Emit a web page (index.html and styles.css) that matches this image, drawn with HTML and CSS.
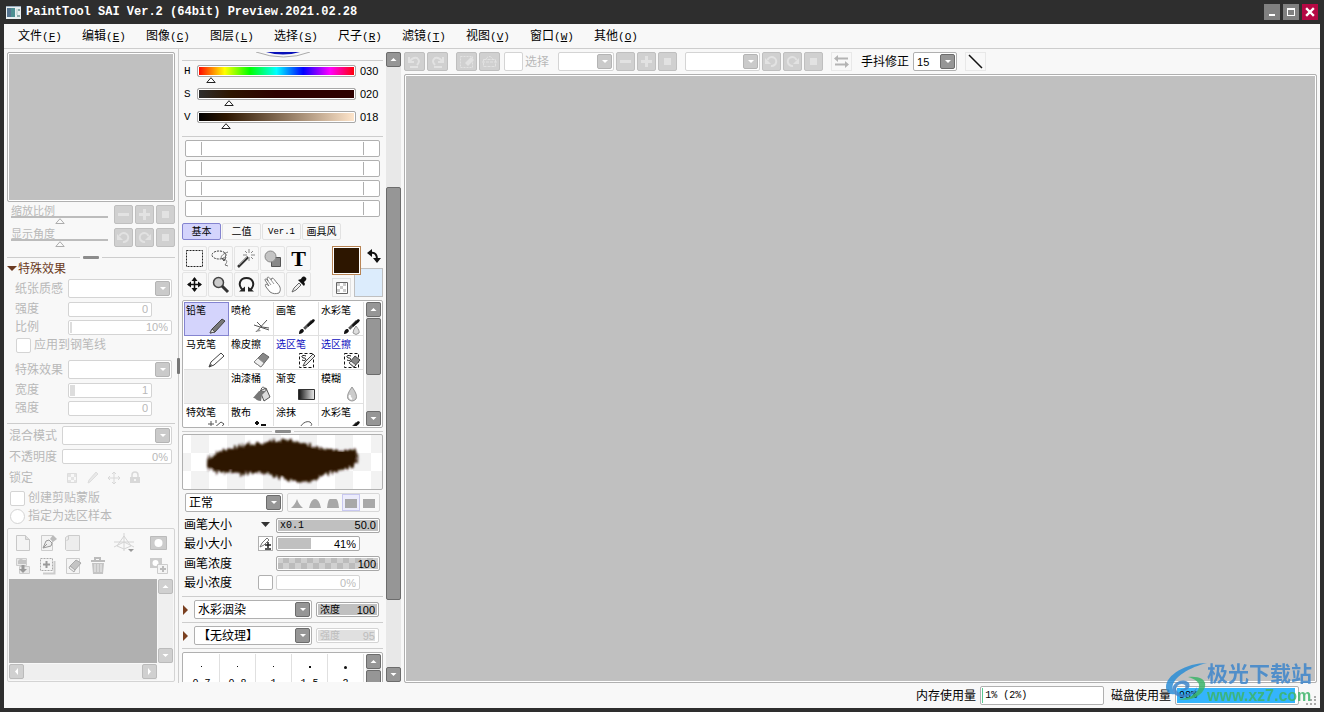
FILE: index.html
```html
<!DOCTYPE html>
<html lang="zh-CN">
<head>
<meta charset="utf-8">
<title>PaintTool SAI Ver.2</title>
<link rel="stylesheet" href="styles.css">
</head>
<body>
<svg class="defs" aria-hidden="true">
  <symbol id="minus" viewBox="0 0 17 17"><path d="M3 7h11v3H3z" fill="currentColor"/></symbol>
  <symbol id="plus" viewBox="0 0 17 17"><path d="M3 7h4V3h3v4h4v3h-4v4H7v-4H3z" fill="currentColor"/></symbol>
  <symbol id="stop" viewBox="0 0 17 17"><path d="M5 5h7v7H5z" fill="currentColor"/></symbol>
  <symbol id="ccw" viewBox="0 0 17 17"><path d="M4.500 7A4.500 4.500 0 1 1 8 13" fill="none" stroke="currentColor" stroke-width="2"/><path d="M2 5v6h6z" fill="currentColor"/></symbol>
  <symbol id="cw" viewBox="0 0 17 17"><path d="M12.500 7A4.500 4.500 0 1 0 9 13" fill="none" stroke="currentColor" stroke-width="2"/><path d="M15 5v6H9z" fill="currentColor"/></symbol>
  <symbol id="up" viewBox="0 0 13 13"><path d="M6.500 5l3 3h-6z" fill="currentColor"/></symbol>
  <symbol id="down" viewBox="0 0 13 13"><path d="M6.500 8l3-3h-6z" fill="currentColor"/></symbol>
  <symbol id="left" viewBox="0 0 13 13"><path d="M5 6.500l3-3.500v7z" fill="currentColor"/></symbol>
  <symbol id="right" viewBox="0 0 13 13"><path d="M8 6.500L5 3v7z" fill="currentColor"/></symbol>
  <symbol id="brush" viewBox="0 0 18 18"><path d="M1 17c0-3 1-5 4-5l1 2c-1 2-3 3-5 3z" fill="#111"/><path d="M5 11l8-8 2 2-8 8z" fill="#555"/><path d="M9 8l6-6 2 1-1 2-6 5z" fill="#111"/><path d="M5 11l2 2" stroke="#ddd"/></symbol>
</svg>

<div class="window">
  <header class="titlebar">
    <svg class="logo" width="15" height="13" viewBox="0 0 15 13"><path d="M0 0h15v13H0z" fill="#e8eef0"/><path d="M1 2h8v9H1z" fill="#4c8f92"/><path d="M1 2h4v9H1z" fill="#54738f"/><path d="M10 3h2v6h-2z" fill="#cdd"/><path d="M12 3h2v2h-2zM11 9h3v2h-3z" fill="#8aa"/><path d="M0 0h15v1H0z" fill="#9ab"/></svg>
    <h1>PaintTool SAI Ver.2 (64bit) Preview.2021.02.28</h1>
    <div class="winbtns">
      <button aria-label="最小化"><svg width="16" height="16"><path d="M5 10h6v2H5z" fill="#fff"/></svg></button>
      <button aria-label="最大化"><svg width="16" height="16"><path d="M4 4h8v8H4zM5 6v5h6V6z" fill="#fff" fill-rule="evenodd"/></svg></button>
      <button class="close" aria-label="关闭"><svg width="16" height="16"><path d="M5 5l6 6M11 5l-6 6" stroke="#fff" stroke-width="2.400" stroke-linecap="square"/></svg></button>
    </div>
  </header>

  <nav class="menu">
    <button>文件<span>(<u>F</u>)</span></button>
    <button>编辑<span>(<u>E</u>)</span></button>
    <button>图像<span>(<u>C</u>)</span></button>
    <button>图层<span>(<u>L</u>)</span></button>
    <button>选择<span>(<u>S</u>)</span></button>
    <button>尺子<span>(<u>R</u>)</span></button>
    <button>滤镜<span>(<u>T</u>)</span></button>
    <button>视图<span>(<u>V</u>)</span></button>
    <button>窗口<span>(<u>W</u>)</span></button>
    <button>其他<span>(<u>O</u>)</span></button>
  </nav>

  <div class="work">
    <aside class="layers">
      <div class="thumb"></div>
      <div class="nav-row">
        <label class="nav-slider"><span>缩放比例</span><input type="range" value="50" disabled></label>
        <button class="sq" disabled aria-label="缩小"><svg><use href="#minus"/></svg></button>
        <button class="sq" disabled aria-label="放大"><svg><use href="#plus"/></svg></button>
        <button class="sq" disabled aria-label="重置缩放"><svg><use href="#stop"/></svg></button>
      </div>
      <div class="nav-row">
        <label class="nav-slider"><span>显示角度</span><input type="range" value="50" disabled></label>
        <button class="sq" disabled aria-label="左旋"><svg><use href="#ccw"/></svg></button>
        <button class="sq" disabled aria-label="右旋"><svg><use href="#cw"/></svg></button>
        <button class="sq" disabled aria-label="重置角度"><svg><use href="#stop"/></svg></button>
      </div>
      <div class="splitter gap"><i></i></div>
      <button class="section"><svg width="10" height="6"><path d="M0 0h10L5 5z" fill="#6b3a22"/></svg>特殊效果</button>

      <div class="off effects">
        <div class="row tall"><label for="paper">纸张质感</label><span class="sel"><select id="paper" disabled></select></span></div>
        <div class="row"><label for="p1">强度</label><input class="val short" id="p1" value="0" disabled></div>
        <div class="row"><label for="p2">比例</label><input class="val tick" id="p2" value="10%" disabled></div>
        <div class="row"><input type="checkbox" id="pen" disabled><label for="pen">应用到钢笔线</label></div>
        <div class="row tall after"><label for="fx">特殊效果</label><span class="sel"><select id="fx" disabled></select></span></div>
        <div class="row"><label for="f1">宽度</label><input class="val short tick5" id="f1" value="1" disabled></div>
        <div class="row"><label for="f2">强度</label><input class="val short" id="f2" value="0" disabled></div>
      </div>
      <hr>
      <div class="off blend">
        <div class="row tall"><label for="mode">混合模式</label><span class="sel"><select id="mode" disabled></select></span></div>
        <div class="row opacity"><label for="op">不透明度</label><input class="val" id="op" value="0%" disabled></div>
        <div class="row tall"><span class="lab">锁定</span>
          <button class="lock" disabled aria-label="锁定透明"><svg width="16" height="16"><path d="M3.500 3.500h9v9h-9z" fill="none" stroke="#ddd"/><path d="M4 4h3v3H4zM10 4h2v3h-2zM7 7h3v3H7zM4 10h3v2H4zM10 10h2v2h-2z" fill="#e4e4e4"/></svg></button>
          <button class="lock" disabled aria-label="锁定画笔"><svg width="16" height="16"><path d="M3 13l1-3 7-8 2 2-8 8z" fill="#e8e8e8" stroke="#ddd"/></svg></button>
          <button class="lock" disabled aria-label="锁定移动"><svg width="16" height="16"><path d="M8 2v12M2 8h12M6 4l2-2 2 2M6 12l2 2 2-2M4 6L2 8l2 2M12 6l2 2-2 2" fill="none" stroke="#d8d8d8"/></svg></button>
          <button class="lock" disabled aria-label="全部锁定"><svg width="16" height="16"><path d="M3 7h10v6H3z" fill="#d8d8d8"/><path d="M5 7V5a3 3 0 0 1 6 0v2" fill="none" stroke="#d8d8d8" stroke-width="1.500"/><path d="M7 9h2v2H7z" fill="#f4f4f4"/></svg></button>
        </div>
        <div class="row"><input type="checkbox" id="clip" disabled><label for="clip">创建剪贴蒙版</label></div>
        <div class="row"><input type="radio" id="src" disabled><label for="src">指定为选区样本</label></div>
      </div>

      <section class="layerbox">
        <div class="layer-tools">
          <button disabled aria-label="新建图层"><svg width="18" height="18"><path d="M2.500 1.500h9l4 4v11h-13z" fill="#f4f4f4" stroke="#c8c8c8"/><path d="M11.500 1.500v4h4" fill="#ddd" stroke="#c8c8c8"/></svg></button>
          <button disabled aria-label="新建钢笔图层"><svg width="18" height="18"><path d="M2.500 1.500h11v15h-11z" fill="#f4f4f4" stroke="#ccc"/><path d="M4 14l3-7 3-1 3 3-1 3z" fill="#eee" stroke="#999"/><path d="M4 14l4-4" stroke="#999"/><path d="M11 5l3-4 4 4-4 3z" fill="#bbb"/></svg></button>
          <button disabled aria-label="新建图层组"><svg width="18" height="18"><path d="M1.500 3.500l3-2h11v15h-13l-1-1z" fill="#ededed" stroke="#ccc"/><path d="M4.500 1.500v4l-2 1" fill="none" stroke="#ccc"/></svg></button>
          <span></span>
          <button disabled aria-label="透视尺"><svg width="20" height="20"><path d="M10 0v18M10 3L3 13l7 3 7-3zM0 14l10-5 10 5M0 9h20" fill="none" stroke="#d4d4d4"/><path d="M14 16h6l-3 3z" fill="#999"/></svg></button>
          <button disabled aria-label="图层蒙版"><svg width="18" height="18"><path d="M1.500 2.500h16v13h-16z" fill="#ccc" stroke="#bbb"/><circle cx="9.500" cy="9" r="4" fill="#fff"/></svg></button>
          <button disabled aria-label="向下合并"><svg width="18" height="18"><path d="M2.500 1.500h10v7h-10zM5.500 9.500h10v7h-10z" fill="#e9e9e9" stroke="#ccc"/><path d="M4 6a3 3 0 0 1 5-3h3v4H4z" fill="#c4c4c4"/><path d="M7.500 8h3v4H13l-4 4-4-4h2.500z" fill="#999"/></svg></button>
          <button disabled aria-label="复制图层"><svg width="18" height="18"><path d="M15.500 4v12.500H4" fill="none" stroke="#ccc" stroke-width="2"/><path d="M1.500 1.500h12v12h-12z" fill="#f4f4f4" stroke="#aaa" stroke-dasharray="2 1"/><path d="M4 7.500h7M7.500 4v7" stroke="#999" stroke-width="2"/></svg></button>
          <button disabled aria-label="清除图层"><svg width="18" height="18"><path d="M2.500 1.500h13v15h-13z" fill="#f4f4f4" stroke="#ccc"/><path d="M6 9l6-6 5 3-6 7z" fill="#c4c4c4" stroke="#aaa"/><path d="M6 9l5 4-1 2-5-4z" fill="#eee" stroke="#aaa"/></svg></button>
          <button disabled aria-label="删除图层"><svg width="18" height="18"><path d="M2 4h14M6 3V1h5v2" fill="none" stroke="#bcbcbc" stroke-width="2"/><path d="M3 6h12l-1 11H4z" fill="#c4c4c4"/><path d="M6 7v8M9 7v8M12 7v8" stroke="#eee"/></svg></button>
          <span></span>
          <button disabled aria-label="新建蒙版"><svg width="20" height="18"><path d="M1 1h12v10H1z" fill="#ccc"/><circle cx="6.500" cy="6" r="3" fill="#fff"/><path d="M8.500 7.500h10v9h-10z" fill="#f4f4f4" stroke="#ccc"/><path d="M11 12h6M14 9v6" stroke="#bbb" stroke-width="2"/></svg></button>
        </div>
        <div class="layer-list"></div>
        <div class="vbar"><button disabled aria-label="向上"><svg><use href="#up"/></svg></button><button disabled aria-label="向下"><svg><use href="#down"/></svg></button></div>
        <div class="hbar"><button disabled aria-label="向左"><svg><use href="#left"/></svg></button><button disabled aria-label="向右"><svg><use href="#right"/></svg></button></div>
      </section>
    </aside>
    <div class="divider"><i></i></div>

    <aside class="tools">
      <div class="tools-body">
        <svg class="wheel" width="60" height="6"><path d="M12 0h34q-17 5-34 0z" fill="#0810b8"/><path d="M2 0q28 10 54 0" fill="none" stroke="#aaa"/></svg>
        <hr>
        <div class="hsv"><label for="h">H</label><div class="track"><div class="bar hue"></div><input type="range" id="h" max="360" value="30"></div><output>030</output></div>
        <div class="hsv"><label for="s">S</label><div class="track"><div class="bar sat"></div><input type="range" id="s" max="100" value="20"></div><output>020</output></div>
        <div class="hsv"><label for="v">V</label><div class="track"><div class="bar lum"></div><input type="range" id="v" max="100" value="18"></div><output>018</output></div>
        <hr>
        <div class="mixers"><div><i></i></div><div><i></i></div><div><i></i></div><div><i></i></div></div>
        <div class="tabs"><button class="on">基本</button><button>二值</button><button class="mono">Ver.1</button><button>画具风</button></div>

        <div class="toolrow">
          <div class="toolgrid">
            <button aria-label="选框"><svg><path d="M3.500 3.500h16v16h-16z" fill="none" stroke="#222" stroke-dasharray="2 1"/></svg></button>
            <button aria-label="套索"><svg><ellipse cx="10" cy="8" rx="7" ry="4" fill="none" stroke="#333" stroke-dasharray="2 1"/><path d="M19 5c-6 2-9 6-5 7s5 2 2 6l3 1" fill="none" stroke="#777"/><path d="M13 11l2 3 2-4" fill="none" stroke="#444"/></svg></button>
            <button aria-label="魔棒"><svg><path d="M3 20L13 10" stroke="#333" stroke-width="2.500"/><path d="M4 18l8-8" stroke="#999"/><path d="M14 2v4M14 10v4M8 8h4M16 8h4M10 4l2 2M18 4l-2 2M18 12l-2-2" stroke="#888"/></svg></button>
            <button aria-label="形状"><svg><path d="M10.500 10.500h9v9h-9z" fill="#888" stroke="#555"/><circle cx="9.500" cy="9.500" r="5.500" fill="#c4c4c4" stroke="#888"/></svg></button>
            <button class="type" aria-label="文字">T</button>
            <button aria-label="移动"><svg><path d="M11.500 5v13M5 11.500h13" stroke="#111" stroke-width="1.500"/><path d="M11.500 4l3 4h-6zM11.500 19l3-4h-6zM4 11.500l4-3v6zM19 11.500l-4-3v6z" fill="#111"/></svg></button>
            <button aria-label="缩放"><svg><circle cx="9.500" cy="9.500" r="5" fill="#ccc" stroke="#444" stroke-width="1.500"/><path d="M13 13l6 6" stroke="#333" stroke-width="3"/></svg></button>
            <button aria-label="旋转"><svg><path d="M8 17C2 12 5 5 11.500 5s9.500 7 3.500 12" fill="none" stroke="#222" stroke-width="2"/><path d="M4 18.500h6v-5zM19 18.500h-6v-5z" fill="#222"/></svg></button>
            <button aria-label="抓手"><svg><path d="M9 19l-4-5c-2-4 1-3 3-1L4 7c0-2 2-1 3 1L6 5c1-2 3 0 4 2l1-2c2 0 3 3 5 5 4 4 4 7 2 10-3 1-6 1-9-1z" fill="#fff" stroke="#777"/><path d="M7 8l3 4M10 7l3 4" stroke="#999"/></svg></button>
            <button aria-label="吸管"><svg><path d="M5 19l2-4 5-5 2 2-5 5z" fill="#eee" stroke="#666"/><path d="M11 7l6 6 1-2-1-2c3-2 3-4 1-5s-3 0-4 2z" fill="#111"/></svg></button>
          </div>
          <div class="colors">
            <button class="bg" aria-label="背景色"></button>
            <button class="fg" aria-label="前景色"></button>
            <button class="swap" aria-label="交换颜色"><svg width="14" height="14"><path d="M4 4c4-1 6 2 6 6" fill="none" stroke="#111" stroke-width="2"/><path d="M0 4l5-4v8zM10 14L6 9h8z" fill="#111"/></svg></button>
            <button class="clear" aria-label="透明色"><svg width="12" height="12"><path d="M.5.500h11v11H.5z" fill="#fff" stroke="#666"/><path d="M1 1h3v3H1zM7 1h3v3H7zM4 4h3v3H4zM1 7h3v3H1zM7 7h3v3H7z" fill="#ccc"/></svg></button>
          </div>
        </div>

        <section class="brushes">
          <div class="brushgrid">
            <button class="on">铅笔<svg><path d="M1 16l2-4L13 2l3 2L6 15z" fill="#777" stroke="#444"/><path d="M1 16l2-4 3 3z" fill="#ddd" stroke="#555"/></svg></button>
            <button>喷枪<svg><path d="M1 8l15 5M3 15L14 3M4 5l5 5M9 10l7 1" fill="none" stroke="#555"/><path d="M2 15l4-3 2 2z" fill="#999"/></svg></button>
            <button>画笔<svg><use href="#brush"/></svg></button>
            <button>水彩笔<svg><use href="#brush"/><path d="M13 9q4 5 3 7-3 3-6 0 0-3 3-7z" fill="#ddd" stroke="#999"/></svg></button>
            <button>马克笔<svg><path d="M1 16l2-5 10-9 3 3-10 9z" fill="#fff" stroke="#444"/><path d="M1 16l2-3 1 1z" fill="#333"/></svg></button>
            <button>橡皮擦<svg><path d="M1 11l9-9 6 4-8 10z" fill="#888" stroke="#666"/><path d="M1 11l4-4 6 5-3 4z" fill="#eee" stroke="#888"/></svg></button>
            <button class="blue">选区笔<svg><path d="M1.500 2.500h14v14h-14z" fill="none" stroke="#111" stroke-dasharray="3 2"/><path d="M8 5c-5-2-5 2-2 2s2 4-2 2" fill="none" stroke="#111"/><path d="M5 15l2-4 8-8 2 2-9 9z" fill="#eee" stroke="#444"/></svg></button>
            <button class="blue">选区擦<svg><path d="M1.500 2.500h14v14h-14z" fill="none" stroke="#111" stroke-dasharray="3 2"/><path d="M8 5c-5-2-5 2-2 2s2 4-2 2" fill="none" stroke="#111"/><path d="M6 12l6-7 5 4-6 7z" fill="#888" stroke="#444"/><path d="M6 12l2-2 5 4-2 2z" fill="#eee" stroke="#555"/></svg></button>
            <button class="empty" aria-label="空"></button>
            <button>油漆桶<svg><path d="M7 6l6-3 4 9-6 4z" fill="#ddd" stroke="#555"/><path d="M8 6c0-6 5-4 5 0" fill="none" stroke="#555"/><path d="M13 6H6L0 13c4 0 2 3 8 3l1-6z" fill="#777"/></svg></button>
            <button>渐变<svg><defs><linearGradient id="g"><stop stop-color="#111"/><stop offset="1" stop-color="#eee"/></linearGradient></defs><path d="M.5 4.500h16v10H.5z" fill="url(#g)" stroke="#333"/></svg></button>
            <button>模糊<svg><path d="M9 2q6 8 4 12-4 4-8 0-2-4 4-12z" fill="#ccc" stroke="#999"/><path d="M7 10q-1 3 2 4" fill="none" stroke="#fff" stroke-width="2"/></svg></button>
            <button>特效笔<svg><path d="M3 2v6M0 5h6M8 1v3M6 9l7-6 3 2-6 7" fill="none" stroke="#555"/></svg></button>
            <button>散布<svg><path d="M2 4h4M4 2v4" stroke="#111" stroke-width="2"/><path d="M8 5h5v4H8z" fill="#111"/></svg></button>
            <button>涂抹<svg><path d="M2 9c2-6 9-8 11-5 2 2-1 3-2 5" fill="none" stroke="#555"/></svg></button>
            <button>水彩笔<svg><use href="#brush"/></svg></button>
          </div>
          <div class="sbar"><button aria-label="向上"><svg><use href="#up"/></svg></button><i></i><b></b><button aria-label="向下"><svg><use href="#down"/></svg></button></div>
        </section>

        <div class="splitter thin"><i></i></div>
        <div class="stroke">
          <svg viewBox="0 0 199 54" preserveAspectRatio="none">
            <defs><filter id="hair" x="-5%" y="-20%" width="110%" height="140%"><feTurbulence type="fractalNoise" baseFrequency=".45 .08" numOctaves="2" seed="4"/><feDisplacementMap in="SourceGraphic" scale="10" xChannelSelector="R" yChannelSelector="G"/><feGaussianBlur stdDeviation="1"/></filter></defs>
            <path d="M24 29C24 21 32 18 43 15 60 8 80 9 100 5 115 5 125 12 145 14 160 18 173 11 175 20 177 31 164 33 155 36 142 38 138 45 124 46 105 49 98 41 82 38 68 37 62 41 48 37 40 38 25 38 24 29z" fill="#2d1600" filter="url(#hair)"/>
            <path d="M27 29Q31 20 46 18 80 11 100 9 120 11 145 18 168 15 172 21 171 28 154 33 138 36 124 42 106 44 84 35 65 34 48 34 29 36 27 29z" fill="#2d1600"/>
          </svg>
        </div>

        <div class="moderow">
          <span class="sel"><select aria-label="笔刷模式"><option>正常</option></select></span>
          <div class="shapes">
            <button aria-label="尖"><svg><path d="M0 12Q4 9 6 3q2 6 6 9z"/></svg></button>
            <button aria-label="圆"><svg><path d="M0 12q2-9 6-9t6 9z"/></svg></button>
            <button aria-label="梯"><svg><path d="M0 12q1-9 3-9h6q2 0 3 9z"/></svg></button>
            <button class="on" aria-label="方"><svg><path d="M0 3h12v9H0z"/></svg></button>
            <button aria-label="平"><svg><path d="M0 3h12v9H0z"/></svg></button>
          </div>
        </div>

        <div class="params">
          <label for="size">画笔大小</label><svg width="9" height="6"><path d="M0 0h9L4.500 5z" fill="#333"/></svg>
          <div class="meter full"><span>x0.1</span><input id="size" value="50.0"></div>
          <label for="min">最小大小</label><button class="mini" aria-label="笔压"><svg width="13" height="13"><path d="M1 10l2-4 5-5 2 2-5 5z" fill="#fff" stroke="#777"/><path d="M6 8h6M9 5v6M6 12h6" stroke="#222" stroke-width="1.500"/></svg></button>
          <div class="meter short forty"><input id="min" value="41%"></div>
          <label for="den">画笔浓度</label><span></span>
          <div class="meter check"><input id="den" value="100"></div>
          <label for="mind">最小浓度</label><input type="checkbox" aria-label="启用最小浓度">
          <div class="meter short dim"><input id="mind" value="0%" disabled></div>
        </div>
        <hr>
        <div class="texrow"><button aria-label="展开"><svg width="6" height="10"><path d="M0 0l5 5-5 5z" fill="#7a4020"/></svg></button><span class="sel"><select aria-label="笔刷效果"><option>水彩洇染</option></select></span><div class="meter full"><label for="t1">浓度</label><input id="t1" value="100"></div></div>
        <hr>
        <div class="texrow"><button aria-label="展开"><svg width="6" height="10"><path d="M0 0l5 5-5 5z" fill="#7a4020"/></svg></button><span class="sel"><select aria-label="纹理"><option>【无纹理】</option></select></span><div class="meter dim part"><label for="t2">强度</label><input id="t2" value="95" disabled></div></div>
        <hr>
        <section class="sizes">
          <div class="sizegrid"><button><i></i>0.7</button><button><i></i>0.8</button><button><i></i>1</button><button><i class="mid"></i>1.5</button><button><i class="big"></i>2</button></div>
          <div class="sbar"><button aria-label="向上"><svg><use href="#up"/></svg></button><i></i></div>
        </section>
      </div>
      <div class="sbar main"><button aria-label="向上"><svg><use href="#up"/></svg></button><b class="lead"></b><i></i><b></b><button aria-label="向下"><svg><use href="#down"/></svg></button></div>
    </aside>

    <main>
      <div class="toolbar">
        <button class="sq wide" disabled aria-label="撤销"><svg><path d="M3 4v5h5M4 8q3-4 7-3 4 3 0 7M4 14h8" fill="none" stroke="currentColor" stroke-width="2"/></svg></button>
        <button class="sq wide" disabled aria-label="重做"><svg><path d="M14 4v5H9M13 8q-3-4-7-3-4 3 0 7M5 14h8" fill="none" stroke="currentColor" stroke-width="2"/></svg></button>
        <button class="sq wide group" disabled aria-label="取消选择"><svg><path d="M2.500 3.500h12v11h-12z" fill="none" stroke="currentColor" stroke-dasharray="2 1"/><path d="M7 10l6-6 3 3-6 6z" fill="currentColor"/></svg></button>
        <button class="sq wide" disabled aria-label="反选"><svg><path d="M2.500 6.500h12v7h-12zM5 6q3-5 7 0M1 9h15" fill="none" stroke="currentColor" stroke-dasharray="3 1"/></svg></button>
        <label class="pick"><input type="checkbox" disabled>选择</label>
        <span class="sel zoomsel off"><select aria-label="缩放" disabled></select></span>
        <button class="sq" disabled aria-label="缩小"><svg><use href="#minus"/></svg></button>
        <button class="sq" disabled aria-label="放大"><svg><use href="#plus"/></svg></button>
        <button class="sq" disabled aria-label="重置缩放"><svg><use href="#stop"/></svg></button>
        <span class="sel anglesel off"><select aria-label="角度" disabled></select></span>
        <button class="sq" disabled aria-label="左旋"><svg><use href="#ccw"/></svg></button>
        <button class="sq" disabled aria-label="右旋"><svg><use href="#cw"/></svg></button>
        <button class="sq" disabled aria-label="重置角度"><svg><use href="#stop"/></svg></button>
        <button class="plain flip" disabled aria-label="水平翻转"><svg width="17" height="15"><path d="M4 4.500h11M2 10.500h11" stroke="#b4b4b4" stroke-width="2"/><path d="M5 1v7L1 4.500zM12 7v7l4-3.500z" fill="#b4b4b4"/></svg></button>
        <label class="steady" for="steady">手抖修正</label>
        <span class="sel steadysel"><select id="steady"><option>15</option></select></span>
        <button class="plain" aria-label="直线"><svg width="17" height="17"><path d="M2 2l13 13" stroke="#111" stroke-width="1.500"/></svg></button>
      </div>
      <div class="canvas"></div>
    </main>
  </div>

  <footer class="status">
    <span>内存使用量</span><div class="usage"><i style="width:1%"></i><span>1% (2%)</span></div>
    <span>磁盘使用量</span><div class="usage disk"><i style="width:98%"></i><span>98%</span></div>
    <svg class="grip" width="10" height="9"><path d="M8 0h2v2H8zM4 3h2v2H4zM8 3h2v2H8zM0 7h2v2H0zM4 7h2v2H4zM8 7h2v2H8z" fill="#aaa"/></svg>
    <div class="brand">
      <svg width="42" height="40" viewBox="0 0 42 40"><path d="M41 0C20 0 0 12 0 24c0 6 5 8 10 7C-2 20 20 5 41 0z" fill="#2c8ed6"/><path d="M22 14c9-1 19 1 17 10-3 10-17 15-27 12 10 0 20-5 21-12 1-5-4-8-11-10z" fill="#3db56a"/><path d="M7 28c-3-9 12-14 16-8 3 6-6 10-9 6 3 1 7-1 5-4-4-3-11 1-8 6 5 7 17 2 20-4-1 10-20 15-24 4z" fill="#3e86cb"/></svg>
      <div><strong>极光下载站</strong><em>www.xz7.com</em></div>
    </div>
  </footer>
</div>
</body>
</html>
```

FILE: styles.css
```css
*, *::before, *::after { box-sizing: border-box; }

body {
  margin: 0;
  background: #2e2e2e;
  color: #000;
  font: 12px/14px "Liberation Sans", "Noto Sans CJK SC", sans-serif;
}

button, input, select {
  margin: 0;
  padding: 0;
  border: 0;
  background: none;
  color: inherit;
  font: inherit;
  border-radius: 0;
}

svg { display: block; }
.defs { position: absolute; width: 0; height: 0; }

hr {
  width: 100%;
  height: 1px;
  margin: 0;
  border: 0;
  background: #cdcdcd;
}

.window {
  display: flex;
  flex-direction: column;
  height: 100vh;
  padding: 0 4px 4px;
  overflow: hidden;
}

/* title and menu */
.titlebar {
  display: flex;
  align-items: center;
  flex: 0 0 24px;
  padding: 0 2px;
  color: #fff;
}
.titlebar h1 {
  flex: 1;
  margin: 0 0 0 5px;
  font: bold 12px/14px "Liberation Mono", monospace;
}
.winbtns { display: flex; gap: 3px; }
.winbtns button { background: #808080; }
.winbtns .close { background: #b40844; }

.menu {
  display: flex;
  flex: 0 0 25px;
  padding-left: 14px;
  border-bottom: 1px solid #cdcdcd;
  background: #f8f8f8;
}
.menu button { width: 64px; text-align: left; white-space: nowrap; }
.menu span { font: 11px/14px "Liberation Mono", monospace; }

.work {
  display: flex;
  flex: 1;
  min-height: 0;
  background: #f8f8f8;
}

/* shared controls */
.sq {
  display: grid;
  place-items: center;
  flex: none;
  width: 19px;
  height: 19px;
  border: 1px solid #bfbfbf;
  border-radius: 2px;
  background: #d0d0d0;
  color: #e2e2e2;
}
.sq svg { width: 17px; height: 17px; }
.sq.wide { width: 21px; }

.sel {
  position: relative;
  display: block;
  height: 19px;
  border: 1px solid #b0b0b0;
  border-radius: 2px;
  background: #fff;
}
.sel select {
  appearance: none;
  display: block;
  width: 100%;
  height: 17px;
  padding: 0 18px 0 3px;
  line-height: 16px;
  opacity: 1;
}
.sel::before {
  content: "";
  position: absolute;
  top: 1px;
  right: 1px;
  width: 15px;
  height: 15px;
  border: 1px solid #6c6c6c;
  border-radius: 2px;
  background: #969696;
  pointer-events: none;
}
.sel::after {
  content: "";
  position: absolute;
  top: 7px;
  right: 5px;
  border: 3px solid transparent;
  border-top-color: #fff;
  border-bottom: 0;
  pointer-events: none;
}
.off .sel, .sel.off { border-color: #d4d4d4; }
.off .sel::before, .sel.off::before { border-color: #b4b4b4; background: #cacaca; }

input[type="checkbox"], input[type="radio"] {
  appearance: none;
  flex: none;
  width: 15px;
  height: 15px;
  border: 1px solid #b0b0b0;
  border-radius: 2px;
  background: #fff;
}
input[type="radio"] { border-radius: 50%; }
input[type]:disabled { border-color: #d4d4d4; }

.val {
  width: 100%;
  min-width: 0;
  height: 15px;
  padding: 0 3px;
  border: 1px solid #d4d4d4;
  border-radius: 2px;
  background: #fff;
  font-size: 11px;
  text-align: right;
}
.tick { background: linear-gradient(#ddd, #ddd) 1px 1px / 2px 11px no-repeat #fff; }
.tick5 { background: linear-gradient(#ddd, #ddd) 1px 1px / 5px 11px no-repeat #fff; }

input[type="range"] {
  appearance: none;
  display: block;
  height: 6px;
}
input[type="range"]::-webkit-slider-thumb {
  appearance: none;
  width: 10px;
  height: 6px;
  background: url("data:image/svg+xml,%3Csvg xmlns='http://www.w3.org/2000/svg' width='10' height='6'%3E%3Cpath d='M5 .7L.8 5.500h8.400z' fill='white' stroke='%23222'/%3E%3C/svg%3E");
}
input[type="range"]:disabled::-webkit-slider-thumb { opacity: .35; }

.splitter {
  display: flex;
  align-items: center;
  gap: 3px;
  height: 7px;
}
.splitter::before, .splitter::after { content: ""; flex: 1; height: 1px; background: #cdcdcd; }
.splitter i { width: 16px; height: 3px; border-radius: 1px; background: #8c8c8c; }
.splitter.gap { margin: 5px 0 0; }
.splitter.thin { height: 6px; }

/* left panel */
.layers {
  display: flex;
  flex-direction: column;
  flex: 0 0 171px;
  padding: 3px 0 1px 3px;
}
.thumb {
  flex: 0 0 150px;
  border: 1px solid #b0b0b0;
  border-radius: 2px;
  background: #c0c0c0;
  box-shadow: inset 0 0 0 1px #fff;
}
.nav-row {
  display: flex;
  align-items: center;
  gap: 2px;
  height: 23px;
  padding-left: 4px;
  color: #b8b8b8;
}
.nav-row:nth-child(2) { margin-top: 1px; }
.nav-slider { flex: 1; margin-right: 4px; }
.nav-slider span {
  display: block;
  height: 12px;
  border-bottom: 2px solid #bcbcbc;
  font-size: 11px;
  line-height: 10px;
}
.nav-slider input { width: 100%; }
.section {
  display: flex;
  align-items: center;
  gap: 1px;
  height: 16px;
  color: #6b3a22;
}
.off { color: #b8b8b8; }
.row {
  display: grid;
  grid-template-columns: 53px 1fr;
  align-items: center;
  height: 18px;
}
.row.tall { height: 23px; }
.row.after { margin-top: 4px; }
.effects { padding: 0 3px 0 8px; }
.row .short { width: 84px; }
.blend { padding: 0 3px 0 2px; }
.row.opacity { height: 19px; }
.row:has([type="checkbox"]), .row:has([type="radio"]), .row:has(.lock) {
  display: flex;
  gap: 3px;
}
.row [type] { margin-left: 1px; }
.row .lock { width: 18px; padding-left: 1px; }
.row .lab { width: 51px; }
.layers > hr { margin-top: 6px; }
.layerbox {
  display: grid;
  grid-template: auto 1fr 17px / 1fr 16px;
  flex: 1;
  margin-top: 3px;
  padding: 1px;
  border: 1px solid #d4d4d4;
  border-radius: 2px;
}
.layer-tools {
  grid-column: 1 / 3;
  display: grid;
  grid-template-columns: repeat(4, 25px) 1fr 20px;
  align-items: center;
  padding: 1px 4px 2px 5px;
}
.layer-tools button { display: block; height: 23px; }
.layer-list { background: #b0b0b0; }
.vbar, .hbar {
  display: flex;
  justify-content: space-between;
  margin: 0 0 0 1px;
  background: #efefef;
}
.vbar { flex-direction: column; }
.hbar { margin: 1px 0 0; }
.vbar button, .hbar button {
  width: 15px;
  height: 15px;
  border: 1px solid #bbb;
  border-radius: 2px;
  background: #d0d0d0;
  color: #fff;
}
.vbar svg, .hbar svg { width: 13px; height: 13px; }

.divider {
  display: flex;
  align-items: center;
  flex: 0 0 3px;
  margin: 0 2px;
  background: linear-gradient(#cdcdcd, #cdcdcd) center / 1px 100% no-repeat;
}
.divider i { width: 3px; height: 16px; border-radius: 1px; background: #777; }

/* tool panel */
.tools {
  display: flex;
  flex: 0 0 219px;
  gap: 3px;
  padding: 3px 0 1px;
}
.tools-body { flex: 0 0 201px; overflow: hidden; }
.wheel { margin: 0 auto 2px 72px; }
.hsv {
  display: grid;
  grid-template-columns: 15px 159px 1fr;
  align-items: start;
  height: 23px;
  padding-top: 4px;
  font: 11px/13px "Liberation Sans", sans-serif;
}
.hsv label { padding-left: 2px; font-family: "Liberation Mono", monospace; }
.hsv output { padding-left: 4px; }
.bar {
  height: 12px;
  border: 1px solid #a8a8a8;
  border-radius: 2px;
  box-shadow: inset 0 0 0 1px #fff;
}
.hue { background: linear-gradient(90deg, red, #ff0 17%, #0f0 33%, #0ff 50%, #00f 67%, #f0f 84%, red); }
.sat { background: linear-gradient(90deg, #2e2e2e, #2d1600 20%, #2e0000 50%, #2e0000); }
.lum { background: linear-gradient(90deg, #000, #2d1600 18%, #ffe6cc); }
.track input { width: 167px; margin: 0 -4px; }
.hsv + hr { margin-top: 6px; }
.mixers { display: grid; gap: 3px; padding: 3px 3px 0; }
.mixers div {
  height: 17px;
  padding: 0 15px;
  border: 1px solid #b0b0b0;
  border-radius: 2px;
  background: #fff;
}
.mixers i {
  display: block;
  height: 13px;
  margin-top: 1px;
  border: 1px solid #b0b0b0;
  border-width: 0 1px;
}
.tabs {
  display: grid;
  grid-template-columns: repeat(4, 39px);
  gap: 1px;
  margin-top: 6px;
}
.tabs button {
  height: 17px;
  border: 1px solid #e2e2e2;
  border-radius: 2px;
  font-size: 10px;
  line-height: 14px;
}
.tabs .on { border-color: #8484d0; background: #d4d4fc; }
.tabs .mono { font-family: "Liberation Mono", monospace; font-size: 9px; }

.toolrow { display: flex; justify-content: space-between; margin-top: 6px; }
.toolgrid { display: grid; grid-template-columns: repeat(5, 25px); gap: 1px; }
.toolgrid button {
  height: 25px;
  border: 1px solid #e4e4e4;
  border-radius: 2px;
}
.toolgrid svg { width: 23px; height: 23px; }
.toolgrid .type { font: bold 22px/22px "Liberation Serif", serif; }
.colors { position: relative; width: 51px; }
.colors button { position: absolute; }
.colors .fg {
  top: 0;
  left: 0;
  width: 29px;
  height: 29px;
  border: 1px solid #b88454;
  background: #2d1600;
  box-shadow: inset 0 0 0 1px #fff;
}
.colors .bg {
  right: 0;
  bottom: 0;
  width: 29px;
  height: 29px;
  border: 1px solid #c0c0c0;
  background: #dcecfc;
}
.colors .swap { top: 3px; right: 2px; }
.colors .clear {
  left: 0;
  bottom: 0;
  width: 19px;
  height: 19px;
  padding: 3px;
  border: 1px solid #e0e0e0;
}

.brushes {
  display: flex;
  height: 128px;
  margin-top: 3px;
  padding: 1px;
  border: 1px solid #b0b0b0;
  border-radius: 2px;
  background: #fff;
}
.brushgrid {
  display: grid;
  grid-template-columns: repeat(4, 45px);
  grid-auto-rows: 34px;
  flex: 1;
  overflow: hidden;
}
.brushgrid button {
  display: flex;
  flex-direction: column;
  height: 34px;
  padding: 2px 2px 0;
  border: 1px solid #e0e0e0;
  border-width: 0 1px 1px 0;
  font-size: 10px;
  line-height: 13px;
  text-align: left;
  white-space: nowrap;
}
.brushgrid svg { width: 18px; height: 18px; align-self: flex-end; }
.brushgrid .on { padding: 1px 1px 0; border: 1px solid #8484d0; background: #d4d4fc; }
.brushgrid .blue { color: #1010c0; }
.brushgrid .empty { background: #efefef; }

.sbar {
  display: flex;
  flex-direction: column;
  flex: 0 0 15px;
  background: #e8e8e8;
}
.sbar button {
  flex: 0 0 15px;
  border: 1px solid #6c6c6c;
  border-radius: 2px;
  background: #969696;
  color: #fff;
}
.sbar svg { width: 13px; height: 13px; }
.sbar i {
  flex: 56;
  margin-top: 1px;
  border: 1px solid #6c6c6c;
  border-radius: 2px;
  background: #969696;
}
.sbar b { flex: 37; }
.sbar.main b.lead { flex: 120; }
.sbar.main i { flex: 413; margin: 0; }
.sbar.main b { flex: 67; }

.stroke {
  height: 56px;
  border: 1px solid #b0b0b0;
  border-radius: 2px;
  background: repeating-conic-gradient(#f2f2f2 0 25%, #fff 0 50%) -10px 0 / 36px 36px;
}
.stroke svg { width: 100%; height: 100%; }

.moderow {
  display: grid;
  grid-template-columns: 98px 93px;
  gap: 4px;
  padding: 3px 3px 0;
}
.shapes {
  display: grid;
  grid-template-columns: repeat(5, 18px);
  height: 19px;
  border: 1px solid #d8d8d8;
  border-radius: 2px;
}
.shapes button { display: grid; place-items: center; border: 1px solid transparent; }
.shapes .on { border-color: #c8c8f0; background: #ececfc; }
.shapes svg { width: 12px; height: 14px; fill: #a8a8a8; }

.params {
  display: grid;
  grid-template-columns: 72px 19px 1fr;
  grid-template-rows: 20px 17px 23px 15px;
  align-items: center;
  padding: 3px 3px 6px 2px;
}
.params svg { justify-self: center; }
.params > input, .mini { justify-self: center; }
.mini { width: 15px; height: 15px; border: 1px solid #b0b0b0; background: #fff; }
.meter {
  display: flex;
  align-items: center;
  justify-content: space-between;
  height: 15px;
  margin-left: 1px;
  padding: 0 3px;
  border: 1px solid #a8a8a8;
  border-radius: 2px;
  background: #fff;
  box-shadow: inset 0 0 0 1px #fff;
  font-size: 11px;
}
.meter span { font: 10px/13px "Liberation Mono", monospace; }
.meter label { font-size: 10px; white-space: nowrap; }
.meter input { flex: 1; width: 20px; min-width: 0; text-align: right; }
.meter.full { background: #c0c0c0; }
.meter.short { width: 84px; }
.meter.forty { background: linear-gradient(90deg, #c0c0c0 41%, #fff 41%); }
.meter.check { background: repeating-conic-gradient(#bcbcbc 0 25%, #d0d0d0 0 50%) 0 0 / 12px 12px; }
.meter.dim { border-color: #d4d4d4; color: #bcbcbc; }
.meter.part { background: linear-gradient(90deg, #e0e0e0 95%, #fff 95%); }

.texrow {
  display: grid;
  grid-template-columns: 8px 118px 63px;
  column-gap: 4px;
  align-items: center;
  height: 25px;
}
.texrow button { padding-left: 1px; }
.texrow .meter { margin-left: 0; }
.sizes {
  display: flex;
  height: 54px;
  margin-top: 3px;
  padding: 1px;
  border: 1px solid #b0b0b0;
  border-radius: 2px;
  background: #fff;
}
.sizegrid { display: grid; grid-template-columns: repeat(5, 36px); flex: 1; }
.sizegrid button {
  display: flex;
  flex-direction: column;
  align-items: center;
  padding-top: 12px;
  border-right: 1px solid #e0e0e0;
  font: 10px/12px "Liberation Mono", monospace;
}
.sizegrid i { width: 1px; height: 1px; margin-bottom: 11px; background: #111; }
.sizegrid .mid { width: 2px; height: 2px; margin-bottom: 10px; }
.sizegrid .big { width: 3px; height: 3px; margin-bottom: 9px; border-radius: 50%; }

/* canvas side */
main {
  display: flex;
  flex-direction: column;
  flex: 1;
  min-width: 0;
  margin-left: 3px;
  padding: 3px 3px 0 0;
}
.toolbar {
  display: flex;
  align-items: center;
  gap: 2px;
  flex: 0 0 19px;
  white-space: nowrap;
}
.sq.group { margin-left: 6px; }
.pick {
  display: flex;
  align-items: center;
  gap: 2px;
  margin: 0 7px 0 2px;
  color: #b8b8b8;
}
.pick input[type="checkbox"] { width: 19px; height: 19px; }
.zoomsel { width: 56px; }
.anglesel { width: 75px; margin-left: 6px; }
.plain { display: grid; place-items: center; width: 21px; height: 19px; border: 1px solid #e8e8e8; }
.flip { margin-left: 6px; }
.steady { margin-left: 7px; }
.steadysel { width: 44px; margin: 0 6px 0 2px; font-size: 11px; }
.canvas {
  flex: 1;
  margin-top: 3px;
  border: 1px solid #b0b0b0;
  border-radius: 2px;
  background: #c0c0c0;
  box-shadow: inset 0 0 0 1px #fff;
}

.status {
  position: relative;
  display: flex;
  align-items: center;
  justify-content: flex-end;
  gap: 4px;
  flex: 0 0 25px;
  padding-right: 4px;
  background: #f8f8f8;
}
.usage {
  display: flex;
  align-items: center;
  width: 124px;
  height: 19px;
  margin-right: 3px;
  padding: 2px 1px;
  border: 1px solid #b0b0b0;
  border-radius: 2px;
  background: #fff;
}
.usage i { height: 15px; margin-right: 2px; background: #58c890; }
.usage span { font: 10px/13px "Liberation Mono", monospace; }
.usage.disk i { background: #34b4fc; }
.usage.disk span { position: absolute; margin-left: 2px; }
.grip { align-self: flex-end; margin-bottom: 3px; }
.brand {
  position: absolute;
  right: 8px;
  bottom: 3px;
  display: flex;
  align-items: center;
  opacity: .85;
}
.brand svg { margin-right: -1px; }
.brand strong, .brand em { display: block; }
.brand strong { color: #3e86cb; font-size: 21px; line-height: 26px; }
.brand em { color: #3db56a; font: bold 16px/18px "Liberation Sans", sans-serif; }
```
